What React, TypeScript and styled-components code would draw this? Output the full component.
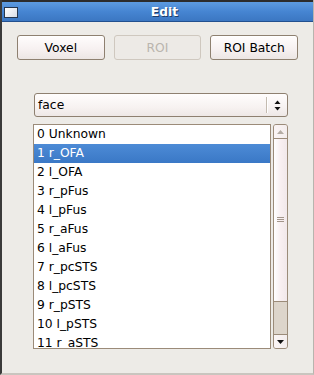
import React from "react";
import styled, { createGlobalStyle } from "styled-components";

const Global = createGlobalStyle`
  html, body { margin: 0; padding: 0; background: #edebe7; }
  body { font-family: "DejaVu Sans", "Liberation Sans", sans-serif; font-size: 12.3px; }
`;

const Window = styled.div`
  width: 314px;
  height: 375px;
  box-sizing: border-box;
  display: flex;
  flex-direction: column;
  background: #edebe7;
  border-left: 2px solid #3a3a3a;
  border-right: 1px solid #b8b4ae;
  border-bottom: 2px solid #c9c5bf;
  overflow: hidden;
`;

const TitleBar = styled.div`
  height: 22px;
  box-sizing: border-box;
  border-top: 2px solid #2c2c2c;
  border-bottom: 1px solid #23508f;
  background: linear-gradient(#5d9be0, #4685d2 50%, #3b77c2);
  display: flex;
  align-items: center;
  padding-left: 4px;
  margin-left: -2px;
`;

const WinIcon = styled.div`
  width: 12px;
  height: 9px;
  border: 1px solid #26364d;
  background: linear-gradient(135deg, #ffffff, #d8dde6);
  margin-top: 1px;
`;

const Title = styled.div`
  flex: 1;
  text-align: center;
  color: #fff;
  font-weight: bold;
  font-size: 12.3px;
  text-shadow: 1px 1px 0 #1d3d6a;
  padding-right: 0px;
  margin-left: -2px;
`;

const Body = styled.div`
  flex: 1;
  display: flex;
  flex-direction: column;
  padding: 13px 15px 0 15px;
`;

const ButtonRow = styled.div`
  display: flex;
  gap: 9px;
  justify-content: space-between;
`;

const Button = styled.div<{ $disabled?: boolean }>`
  width: 86px;
  height: 23px;
  border: 1px solid ${(p) => (p.$disabled ? "#cfc8bf" : "#8e8070")};
  border-radius: 3px;
  background: ${(p) =>
    p.$disabled ? "#edeae6" : "linear-gradient(#fffdfd, #f6f0f0 60%, #ece6e4)"};
  color: ${(p) => (p.$disabled ? "#bab5ae" : "#000")};
  display: flex;
  align-items: center;
  justify-content: center;
  box-shadow: ${(p) => (p.$disabled ? "none" : "inset 0 1px 0 #fff")};
`;

const Combo = styled.div`
  margin: 33px 10px 0 17px;
  height: 22px;
  border: 1px solid #8e8070;
  border-radius: 3px;
  background: linear-gradient(#fffdfd, #f7f2f1 60%, #eee8e6);
  display: flex;
  align-items: center;
`;

const ComboText = styled.div`
  flex: 1;
  padding-left: 3px;
  color: #000;
`;

const ComboSep = styled.div`
  width: 1px;
  height: 16px;
  background: #c4bbb0;
  border-right: 1px solid #fff;
`;

const ComboArrow = styled.div`
  width: 19px;
  display: flex;
  justify-content: center;
`;

const ListArea = styled.div`
  margin: 7px 10px 0 16px;
  display: flex;
  gap: 2px;
  height: 225px;
`;

const ListBox = styled.div`
  flex: 1;
  border: 1px solid #9b8b79;
  background: #fff;
  overflow: hidden;
  padding-top: 0px;
`;

const Row = styled.div<{ $sel?: boolean }>`
  height: 19px;
  line-height: 19px;
  padding-left: 3px;
  white-space: nowrap;
  color: ${(p) => (p.$sel ? "#fff" : "#000")};
  background: ${(p) => (p.$sel ? "linear-gradient(#4d8bd6, #3a78c6)" : "transparent")};
`;

const ScrollBar = styled.div`
  width: 15px;
  box-sizing: border-box;
  border: 1px solid #9b8b79;
  border-radius: 3px;
  display: flex;
  flex-direction: column;
  overflow: hidden;
  background: #ddd5cb;
`;

const ScrollBtn = styled.div`
  height: 13px;
  flex: none;
  display: flex;
  align-items: center;
  justify-content: center;
  background: linear-gradient(90deg, #fbf5f5, #f3eded);
`;

const Thumb = styled.div`
  height: 164px;
  flex: none;
  box-sizing: border-box;
  border-top: 1px solid #9b8b79;
  border-bottom: 1px solid #9b8b79;
  background: linear-gradient(90deg, #fff, #f8eff1 50%, #f1e8ea);
  display: flex;
  align-items: center;
  justify-content: center;
  padding-top: 0px;
`;

const Trough = styled.div`
  flex: 1;
  background: #ddd5cb;
  border-bottom: 1px solid #9b8b79;
`;

const items = [
  "0 Unknown",
  "1 r_OFA",
  "2 l_OFA",
  "3 r_pFus",
  "4 l_pFus",
  "5 r_aFus",
  "6 l_aFus",
  "7 r_pcSTS",
  "8 l_pcSTS",
  "9 r_pSTS",
  "10 l_pSTS",
  "11 r_aSTS",
];

export default function App() {
  return (
    <>
      <Global />
      <Window>
        <TitleBar>
          <WinIcon />
          <Title>Edit</Title>
        </TitleBar>
        <Body>
          <ButtonRow>
            <Button>Voxel</Button>
            <Button $disabled>ROI</Button>
            <Button>ROI Batch</Button>
          </ButtonRow>
          <Combo>
            <ComboText>face</ComboText>
            <ComboSep />
            <ComboArrow>
              <svg width="7" height="11" viewBox="0 0 7 11">
                <path d="M3.5 0.5 L6.5 4 L0.5 4 Z" fill="#111" />
                <path d="M3.5 10.5 L6.5 7 L0.5 7 Z" fill="#111" />
              </svg>
            </ComboArrow>
          </Combo>
          <ListArea>
            <ListBox>
              {items.map((t, i) => (
                <Row key={t} $sel={i === 1}>
                  {t}
                </Row>
              ))}
            </ListBox>
            <ScrollBar>
              <ScrollBtn>
                <svg width="7" height="4" viewBox="0 0 7 4">
                  <path d="M3.5 0 L7 4 L0 4 Z" fill="#b4aca4" />
                </svg>
              </ScrollBtn>
              <Thumb>
                <svg width="7" height="6" viewBox="0 0 7 6">
                  <path d="M0 0.5 H7 M0 2.5 H7 M0 4.5 H7" stroke="#a2958a" strokeWidth="1" />
                </svg>
              </Thumb>
              <Trough />
              <ScrollBtn>
                <svg width="7" height="4" viewBox="0 0 7 4">
                  <path d="M0 0 L7 0 L3.5 4 Z" fill="#111" />
                </svg>
              </ScrollBtn>
            </ScrollBar>
          </ListArea>
        </Body>
      </Window>
    </>
  );
}
